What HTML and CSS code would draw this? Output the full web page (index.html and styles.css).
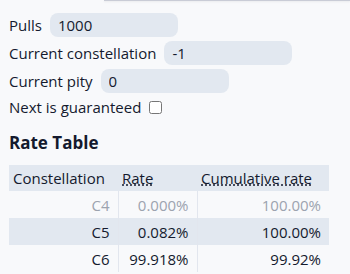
FILE: index.html
```html
<!DOCTYPE html>
<html lang="en">
<head>
    <meta charset="UTF-8">
    <title>Rate calculator</title>
    <link rel="stylesheet" href="styles.css">
</head>
<body>
    <div id="topbar"></div>

    <div id="container">
        <form class="params">
            <div class="field">
                <label for="pulls">Pulls</label>
                <input type="text" id="pulls" value="1000">
            </div>
            <div class="field">
                <label for="cons">Current constellation</label>
                <input type="text" id="cons" value="-1">
            </div>
            <div class="field">
                <label for="pity">Current pity</label>
                <input type="text" id="pity" value="0">
            </div>
            <div class="field check">
                <label for="guar">Next is guaranteed</label>
                <input type="checkbox" id="guar">
            </div>
        </form>

        <h2>Rate Table</h2>
        <table class="rates">
            <thead>
                <tr>
                    <th class="c-name">Constellation</th>
                    <th class="c-rate"><abbr title="Chance to end on this constellation">Rate</abbr></th>
                    <th class="c-cum"><abbr title="Chance to reach at least this constellation">Cumulative rate</abbr></th>
                </tr>
            </thead>
            <tbody>
                <tr class="zero">
                    <td>C4</td>
                    <td>0.000%</td>
                    <td>100.00%</td>
                </tr>
                <tr>
                    <td>C5</td>
                    <td>0.082%</td>
                    <td>100.00%</td>
                </tr>
                <tr>
                    <td>C6</td>
                    <td>99.918%</td>
                    <td>99.92%</td>
                </tr>
            </tbody>
        </table>
    </div>
</body>
</html>
```

FILE: styles.css
```css
body {
    font-family: 'Open Sans', 'Noto Sans', sans-serif;
    font-size: 15px;
    color: #141a2e;
    background-color: #f8f9fb;
    margin: 0;
    padding: 0;
}

#topbar {
    margin-left: 104px;
    height: 1px;
    background-color: #c9ccd6;
    box-shadow: 0 1px 2px rgba(0, 0, 0, 0.08);
}

#container {
    padding: 12px 9px 0;
}

.params {
    display: flex;
    flex-direction: column;
    gap: 4px;
}

.field {
    display: flex;
    align-items: center;
    gap: 8px;
    height: 24px;
}

.field.check {
    height: 20px;
}

.field input[type="text"] {
    font-family: inherit;
    font-size: 15px;
    color: #141a2e;
    width: 128px;
    height: 24px;
    box-sizing: border-box;
    padding: 0 8px;
    border: none;
    border-radius: 8px;
    background-color: #e2e8f0;
}

.field input[type="checkbox"] {
    width: 13px;
    height: 13px;
    margin: 0;
}

h2 {
    font-size: 17px;
    font-weight: bold;
    margin: 14px 0 11px;
}

.rates {
    border-collapse: collapse;
    width: 320px;
}

.rates th {
    font-weight: normal;
    text-align: left;
    background-color: #e2e8f0;
    height: 26px;
    padding: 0 4px;
}

.rates abbr {
    text-decoration: underline dotted;
}

.rates td {
    text-align: right;
    height: 27px;
    padding: 0 8px 0 4px;
    border-left: 1px solid #e2e6ee;
}

.rates td:first-child {
    border-left: none;
}

.rates tbody tr:nth-child(even) {
    background-color: #e2e8f0;
}

.rates tr.zero td {
    color: #9ca3af;
}

.c-name {
    width: 101px;
}

.c-rate {
    width: 71px;
}
```
